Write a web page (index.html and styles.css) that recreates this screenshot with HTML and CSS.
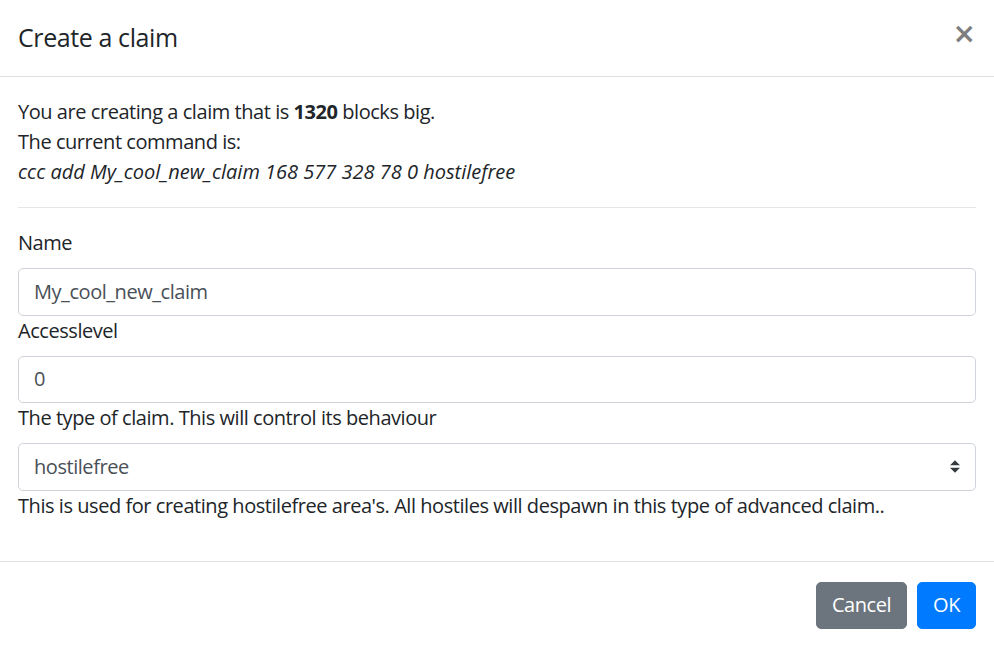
FILE: index.html
```html
<!DOCTYPE html>
<html lang="en">
<head>
<meta charset="utf-8">
<title>Create a claim</title>
<link rel="stylesheet" href="styles.css">
</head>
<body>
<div class="modal">
  <div class="modal-header">
    <h5 class="modal-title">Create a claim</h5>
    <button class="close" type="button" aria-label="Close">&times;</button>
  </div>
  <div class="modal-body">
    <div class="intro">
      You are creating a claim that is <b>1320</b> blocks big.<br>
      The current command is:<br>
      <i class="command">ccc add My_cool_new_claim 168 577 328 78 0 hostilefree</i>
    </div>
    <hr class="divider">
    <label class="field-label">Name</label>
    <div class="form-control">My_cool_new_claim</div>
    <label class="field-label">Accesslevel</label>
    <div class="form-control">0</div>
    <label class="field-label">The type of claim. This will control its behaviour</label>
    <div class="form-control custom-select">
      <span>hostilefree</span>
      <svg class="select-arrow" width="10" height="13" viewBox="0 0 4 5"><path fill="#343a40" d="M2 0L0 2h4zm0 5L0 3h4z"/></svg>
    </div>
    <p class="help">This is used for creating hostilefree area's. All hostiles will despawn in this type of advanced claim..</p>
  </div>
  <div class="modal-footer">
    <button class="btn btn-secondary" type="button">Cancel</button>
    <button class="btn btn-primary" type="button">OK</button>
  </div>
</div>
</body>
</html>
```

FILE: styles.css
```css
* { box-sizing: border-box; }
html, body { margin: 0; padding: 0; background: #fff; overflow: hidden; }
body {
  font-family: "Open Sans", "Noto Sans", sans-serif;
  font-size: 20px;
  line-height: 30px;
  letter-spacing: -0.45px;
  color: #212529;
}
.modal {
  width: 998px;
  margin: -1.5px 0 0 -2px;
  background: #fff;
}
.modal-header {
  display: flex;
  align-items: flex-start;
  justify-content: space-between;
  padding: 20px;
  border-bottom: 1px solid #dee2e6;
}
.modal-title {
  margin: 0;
  font-size: 25px;
  line-height: 37.5px;
  font-weight: 500;
  letter-spacing: -0.4px;
}
.close {
  margin: -20px -20px -20px auto;
  padding: 21px 20px 20px 20px;
  background: transparent;
  border: 0;
  font-family: "DejaVu Sans", sans-serif;
  font-size: 28px;
  font-weight: 700;
  line-height: 1;
  color: #000;
  opacity: .5;
  cursor: pointer;
}
.modal-body {
  padding: 20px;
}
.command {
  letter-spacing: 0;
}
.divider {
  margin: 20px 0;
  border: 0;
  border-top: 1px solid rgba(0,0,0,.1);
}
.field-label {
  display: block;
  margin-bottom: 10px;
}
.form-control {
  height: 47.5px;
  padding: 7.5px 15px;
  border: 1px solid #ced4da;
  border-radius: 5px;
  color: #495057;
  background: #fff;
}
.custom-select {
  display: flex;
  align-items: center;
  justify-content: space-between;
}
.select-arrow { display: block; }
.help {
  margin: 0 0 20px;
}
.modal-footer {
  display: flex;
  justify-content: flex-end;
  align-items: center;
  padding: 15px;
  border-top: 1px solid #dee2e6;
}
.btn {
  margin: 5px;
  padding: 7.5px 15px;
  font-family: inherit;
  font-size: 20px;
  line-height: 30px;
  letter-spacing: -0.45px;
  border: 1px solid transparent;
  border-radius: 5px;
  color: #fff;
  cursor: pointer;
}
.btn-secondary { background: #6c757d; border-color: #6c757d; }
.btn-primary { background: #007bff; border-color: #007bff; }
```
